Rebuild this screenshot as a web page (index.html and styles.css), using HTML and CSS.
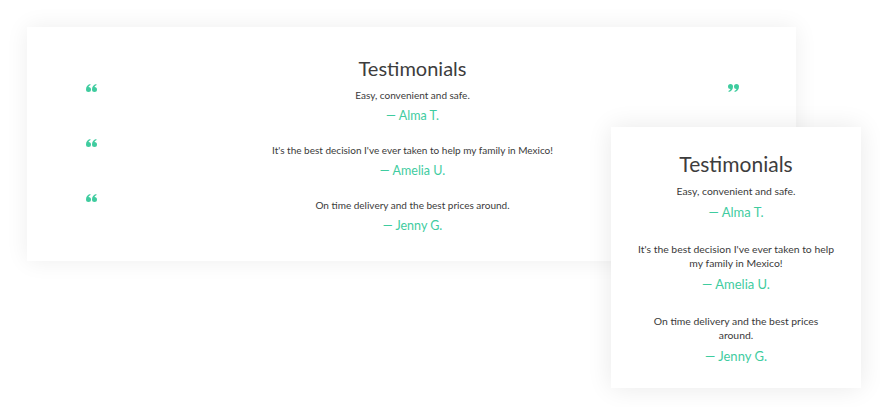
FILE: index.html
```html
<!DOCTYPE html>
<html lang="en">
<head>
<meta charset="utf-8">
<title>Testimonials</title>
<link rel="stylesheet" href="styles.css">
</head>
<body>
<div class="stage">
  <section class="card wide">
    <h2 class="title">Testimonials</h2>
    <div class="row">
      <svg class="mark" viewBox="0 0 11 8" width="11" height="8" aria-hidden="true">
        <path d="M0,5.5 C0,2.8 1.5,0.8 4.2,0 L4.6,0.9 C3.3,1.6 2.7,2.3 2.5,3 A2.5,2.5 0 1 1 0,5.5 Z"/>
        <path transform="translate(6 0)" d="M0,5.5 C0,2.8 1.5,0.8 4.2,0 L4.6,0.9 C3.3,1.6 2.7,2.3 2.5,3 A2.5,2.5 0 1 1 0,5.5 Z"/>
      </svg>
      <div class="item">
        <p class="quote">Easy, convenient and safe.</p>
        <p class="name">— Alma T.</p>
      </div>
      <svg class="mark" viewBox="0 0 11 8" width="11" height="8" aria-hidden="true">
        <g transform="rotate(180 5.5 4)">
          <path d="M0,5.5 C0,2.8 1.5,0.8 4.2,0 L4.6,0.9 C3.3,1.6 2.7,2.3 2.5,3 A2.5,2.5 0 1 1 0,5.5 Z"/>
          <path transform="translate(6 0)" d="M0,5.5 C0,2.8 1.5,0.8 4.2,0 L4.6,0.9 C3.3,1.6 2.7,2.3 2.5,3 A2.5,2.5 0 1 1 0,5.5 Z"/>
        </g>
      </svg>
    </div>
    <div class="row">
      <svg class="mark" viewBox="0 0 11 8" width="11" height="8" aria-hidden="true">
        <path d="M0,5.5 C0,2.8 1.5,0.8 4.2,0 L4.6,0.9 C3.3,1.6 2.7,2.3 2.5,3 A2.5,2.5 0 1 1 0,5.5 Z"/>
        <path transform="translate(6 0)" d="M0,5.5 C0,2.8 1.5,0.8 4.2,0 L4.6,0.9 C3.3,1.6 2.7,2.3 2.5,3 A2.5,2.5 0 1 1 0,5.5 Z"/>
      </svg>
      <div class="item">
        <p class="quote">It's the best decision I've ever taken to help my family in Mexico!</p>
        <p class="name">— Amelia U.</p>
      </div>
      <span></span>
    </div>
    <div class="row">
      <svg class="mark" viewBox="0 0 11 8" width="11" height="8" aria-hidden="true">
        <path d="M0,5.5 C0,2.8 1.5,0.8 4.2,0 L4.6,0.9 C3.3,1.6 2.7,2.3 2.5,3 A2.5,2.5 0 1 1 0,5.5 Z"/>
        <path transform="translate(6 0)" d="M0,5.5 C0,2.8 1.5,0.8 4.2,0 L4.6,0.9 C3.3,1.6 2.7,2.3 2.5,3 A2.5,2.5 0 1 1 0,5.5 Z"/>
      </svg>
      <div class="item">
        <p class="quote">On time delivery and the best prices around.</p>
        <p class="name">— Jenny G.</p>
      </div>
      <span></span>
    </div>
  </section>

  <section class="card narrow">
    <h2 class="title">Testimonials</h2>
    <div class="item">
      <p class="quote">Easy, convenient and safe.</p>
      <p class="name">— Alma T.</p>
    </div>
    <div class="item">
      <p class="quote">It's the best decision I've ever taken to help my family in Mexico!</p>
      <p class="name">— Amelia U.</p>
    </div>
    <div class="item">
      <p class="quote">On time delivery and the best prices around.</p>
      <p class="name">— Jenny G.</p>
    </div>
  </section>
</div>
</body>
</html>
```

FILE: styles.css
```css
* { box-sizing: border-box; }
html, body { margin: 0; padding: 0; background: #ffffff; }
body {
  font-family: Lato, "Open Sans", "Liberation Sans", sans-serif;
  color: #3a3a3a;
}
.stage {
  position: relative;
  width: 880px;
  height: 407px;
  padding: 27px 0 0 27px;
  overflow: hidden;
}
.card {
  background: #fff;
  box-shadow: 0 0 22px rgba(0, 0, 0, 0.07);
  text-align: center;
}
.title {
  margin: 0;
  font-weight: 400;
  color: #3d3d3d;
}
.quote { margin: 0; }
.name { margin: 0; color: #3fcc9f; }

.wide {
  width: 769px;
  height: 234px;
  padding: 29px 57px 0 59px;
}
.wide .title { font-size: 20px; line-height: 24px; margin-bottom: 8px; }
.wide .row {
  display: grid;
  grid-template-columns: 11px 1fr 11px;
  margin-bottom: 19px;
}
.wide .quote { font-size: 10px; line-height: 14px; }
.wide .name { font-size: 12.5px; line-height: 16px; margin-top: 6px; }
.mark {
  display: block;
  fill: #3fcc9f;
  margin-top: -4px;
}
.narrow {
  position: absolute;
  left: 611px;
  top: 127px;
  width: 250px;
  height: 261px;
  padding: 24px 25px 0;
  box-shadow: 0 0 24px rgba(0, 0, 0, 0.09);
}
.narrow .title { font-size: 21px; line-height: 26px; margin-bottom: 7px; }
.narrow .item { margin-bottom: 22px; }
.narrow .quote { font-size: 10.4px; line-height: 14px; }
.narrow .name { font-size: 13px; line-height: 16px; margin-top: 6px; }
```
